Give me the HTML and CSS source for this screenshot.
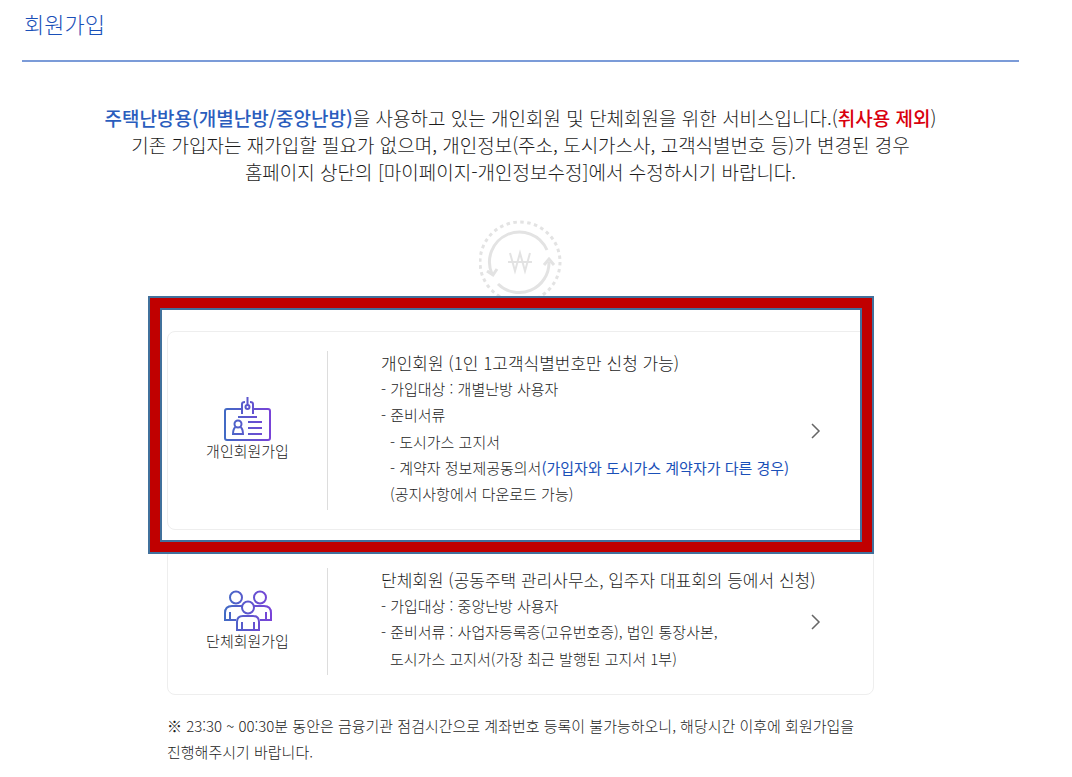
FILE: index.html
```html
<!DOCTYPE html>
<html lang="ko">
<head>
  <meta charset="UTF-8">
  <meta name="viewport" content="width=device-width, initial-scale=1.0">
  <title>회원가입</title>
  <link rel="stylesheet" href="styles.css">
</head>
<body>
  <h1 class="page-title">회원가입</h1>
  <main class="content">
    <p class="intro">
      <strong class="blue">주택난방용(개별난방/중앙난방)</strong>을 사용하고 있는 개인회원 및 단체회원을 위한 서비스입니다.(<strong class="red">취사용 제외</strong>)<br>
      기존 가입자는 재가입할 필요가 없으며, 개인정보(주소, 도시가스사, 고객식별번호 등)가 변경된 경우<br>
      홈페이지 상단의 [마이페이지-개인정보수정]에서 수정하시기 바랍니다.
    </p>
    <svg class="won" width="84" height="84" viewBox="0 0 84 84" fill="none" stroke="#e3e3e3" aria-hidden="true">
      <circle cx="41" cy="42" r="40" stroke-width="3" stroke-dasharray="3.500 3.480"/>
      <path stroke-width="3" d="M68 30A30 30 0 0 0 13 54M19 64A30 30 0 0 0 70 42"/>
      <path stroke-width="3" d="M8 51l6 4 4-6M65 45l5-6 5 6"/>
      <path stroke-width="2" d="M31 33l5 18 5-18 5 18 5-18M29 42h24"/>
    </svg>
    <!-- Member types -->
    <div class="cards">
      <a class="card marked" href="#personal">
        <span class="kind">
          <svg width="48" height="45" viewBox="0 0 48 45" fill="none" stroke="url(#g1)" stroke-width="2" aria-hidden="true">
            <defs><linearGradient id="g1" gradientUnits="userSpaceOnUse" x1="0" y1="0" x2="48" y2="0"><stop stop-color="#416bc4"/><stop offset="1" stop-color="#7a42d8"/></linearGradient></defs>
            <path d="M18 12H3a2 2 0 0 0-2 2v27a2 2 0 0 0 2 2h41a2 2 0 0 0 2-2V14a2 2 0 0 0-2-2H29"/>
            <path d="M18 17V7q0-2 3-2M29 17V7q0-2-3-2M23.500 0v8M14 20h19"/>
            <circle cx="23.500" cy="10" r="2"/>
            <circle cx="14" cy="27" r="3.500"/>
            <path d="M11.500 30Q9 32 9 37h10q0-5-2.500-7M24 25h14M24 31h14M24 37h14"/>
          </svg>
          <span>개인회원가입</span>
        </span>
        <span class="info">
          <b class="name">개인회원 (1인 1고객식별번호만 신청 가능)</b>
          <span class="line">- 가입대상 : 개별난방 사용자</span>
          <span class="line">- 준비서류</span>
          <span class="sub">
            <span class="line">- 도시가스 고지서</span>
            <span class="line">- 계약자 정보제공동의서<em>(가입자와 도시가스 계약자가 다른 경우)</em></span>
            <span class="line">(공지사항에서 다운로드 가능)</span>
          </span>
        </span>
        <svg class="arrow" width="10" height="16" viewBox="0 0 10 16" fill="none" stroke="#666" stroke-width="1.500" aria-hidden="true"><path d="M1 1l7 7-7 7"/></svg>
      </a>
      <a class="card" href="#group">
        <span class="kind">
          <svg width="48" height="42" viewBox="0 0 48 42" fill="none" stroke="url(#g2)" stroke-width="2" aria-hidden="true">
            <defs><linearGradient id="g2" gradientUnits="userSpaceOnUse" x1="0" y1="0" x2="48" y2="0"><stop stop-color="#416bc4"/><stop offset="1" stop-color="#7a42d8"/></linearGradient></defs>
            <circle cx="12" cy="7.500" r="6"/>
            <circle cx="36" cy="7.500" r="6"/>
            <circle cx="24" cy="17.500" r="6"/>
            <path d="M18 16H8q-7 0-7 7v7h11M6 30v-8M30 16h10q7 0 7 7v7H36M42 30v-8"/>
            <path d="M13 40V32q0-6 6-6h10q6 0 6 6v8zM18 40v-8M30 40v-8"/>
          </svg>
          <span>단체회원가입</span>
        </span>
        <span class="info">
          <b class="name">단체회원 (공동주택 관리사무소, 입주자 대표회의 등에서 신청)</b>
          <span class="line">- 가입대상 : 중앙난방 사용자</span>
          <span class="line">- 준비서류 : 사업자등록증(고유번호증), 법인 통장사본,</span>
          <span class="sub">
            <span class="line">도시가스 고지서(가장 최근 발행된 고지서 1부)</span>
          </span>
        </span>
        <svg class="arrow" width="10" height="16" viewBox="0 0 10 16" fill="none" stroke="#666" stroke-width="1.500" aria-hidden="true"><path d="M1 1l7 7-7 7"/></svg>
      </a>
      <p class="notice">※ 23:30 ~ 00:30분 동안은 금융기관 점검시간으로 계좌번호 등록이 불가능하오니, 해당시간 이후에 회원가입을 진행해주시기 바랍니다.</p>
    </div>
  </main>
</body>
</html>
```
FILE: styles.css
```css
* {
  box-sizing: border-box;
}
body {
  margin: 0;
  padding: 0 53px 0 22px;
  background: #fff;
  color: #1c1c1c;
  font: 300 15px/26px "Noto Sans CJK KR", sans-serif;
  word-break: keep-all;
}
.page-title {
  margin: 0;
  padding: 7px 2px 21px;
  border-bottom: 2px solid #7b9bd8;
  color: #1a50b8;
  font-size: 22px;
  font-weight: 300;
  line-height: 32px;
}
.content {
  display: flex;
  flex-direction: column;
  align-items: center;
  padding-top: 42px;
}
.intro {
  margin: 0;
  font-size: 19px;
  line-height: 27px;
  text-align: center;
}
.intro strong {
  font-weight: 500;
}
.blue {
  color: #2a5dbd;
}
.red {
  color: #d9000d;
}
.won {
  margin: 35px 0 27px;
}
.cards {
  display: flex;
  flex-direction: column;
  gap: 18px;
  width: 100%;
  max-width: 707px;
}
.card {
  position: relative;
  display: flex;
  align-items: center;
  padding: 19px 52px 19px 0;
  border: 1px solid #eee;
  border-radius: 8px;
  color: inherit;
  text-decoration: none;
}
/* red highlight frame over the card */
.marked::after {
  content: "";
  position: absolute;
  z-index: 1;
  inset: -36px -1px -25px -20px;
  border: 2px solid #41719c;
  box-shadow: inset 0 0 0 10px #c00000, inset 0 0 0 12px #41719c;
}
.kind {
  display: flex;
  flex-direction: column;
  align-items: center;
  justify-content: center;
  align-self: stretch;
  flex: 0 0 160px;
  padding-bottom: 4px;
  border-right: 1px solid #ddd;
  line-height: 18px;
}
.info {
  flex: 1;
  min-width: 0;
  padding: 0 0 3px 53px;
}
.name,
.line,
.sub {
  display: block;
}
.name {
  padding-bottom: 2px;
  font-size: 17px;
  font-weight: 300;
  line-height: 23px;
  white-space: nowrap;
}
.sub {
  padding: 1px 0 0 9px;
}
.line em {
  color: #1a50b8;
  font-style: normal;
  font-weight: 400;
}
.arrow {
  flex: none;
}
.notice {
  margin: 0;
}
```
